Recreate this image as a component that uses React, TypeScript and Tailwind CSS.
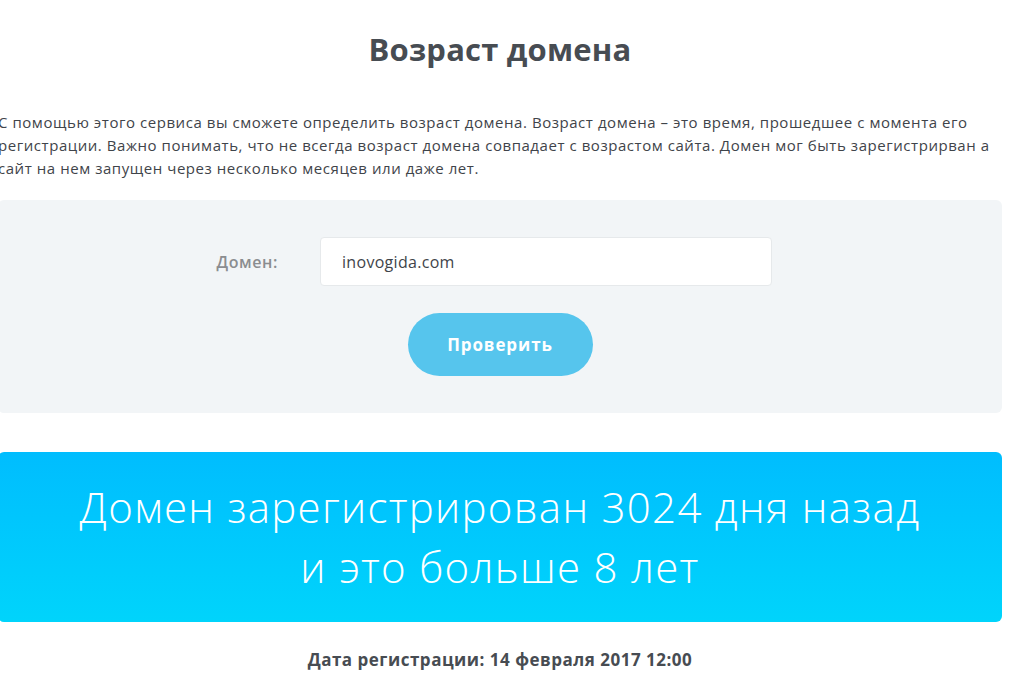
import React, { useState } from 'react';

const font = { fontFamily: '"Open Sans", "Noto Sans", sans-serif' };

function App() {
  const [domain, setDomain] = useState('inovogida.com');

  return (
    <div className="min-h-screen w-full overflow-hidden bg-white" style={font}>
      <div className="ml-[-2px] w-[1004px]">
        <h1 className="pt-[31px] text-center text-[31px] font-bold leading-[36px] tracking-[0.2px] text-[#474c52]">
          Возраст домена
        </h1>
        <p className="mt-[44px] whitespace-nowrap text-[15px] leading-[23px] tracking-[0.55px] text-[#3f444a]">
          С помощью этого сервиса вы сможете определить возраст домена. Возраст домена – это время, прошедшее с момента его
          <br />
          регистрации. Важно понимать, что не всегда возраст домена совпадает с возрастом сайта. Домен мог быть зарегистрирван а
          <br />
          сайт на нем запущен через несколько месяцев или даже лет.
        </p>

        <div className="mt-[20px] rounded-md bg-[#f2f5f7] pt-[37px] pb-[37px]">
          <div className="flex items-center">
            <label className="w-[280px] text-right text-[16px] font-semibold tracking-[0.6px] text-[#8b8d90]">Домен:</label>
            <input
              value={domain}
              onChange={(e) => setDomain(e.target.value)}
              className="ml-[42px] h-[49px] w-[452px] rounded-sm border border-[#e6e9eb] bg-white pl-[21px] text-[16px] tracking-[0.3px] text-[#3f444a] outline-none"
            />
          </div>
          <div className="mt-[27px] flex justify-center">
            <button className="h-[63px] w-[185px] rounded-full bg-[#56c5ed] text-[17px] font-bold tracking-[0.9px] text-white">
              Проверить
            </button>
          </div>
        </div>

        <div className="mt-[39px] rounded-md bg-linear-to-b from-[#00bdfe] to-[#00d4fb] py-[25px] text-center text-[42px] font-light leading-[60px] tracking-[1.3px] text-white">
          Домен зарегистрирован 3024 дня назад
          <br />
          и это больше 8 лет
        </div>

        <p className="mt-[26px] text-center text-[17px] font-bold leading-[24px] tracking-[0.5px] text-[#474c52]">
          Дата регистрации: 14 февраля 2017 12:00
        </p>
      </div>
    </div>
  );
}

export default App;
